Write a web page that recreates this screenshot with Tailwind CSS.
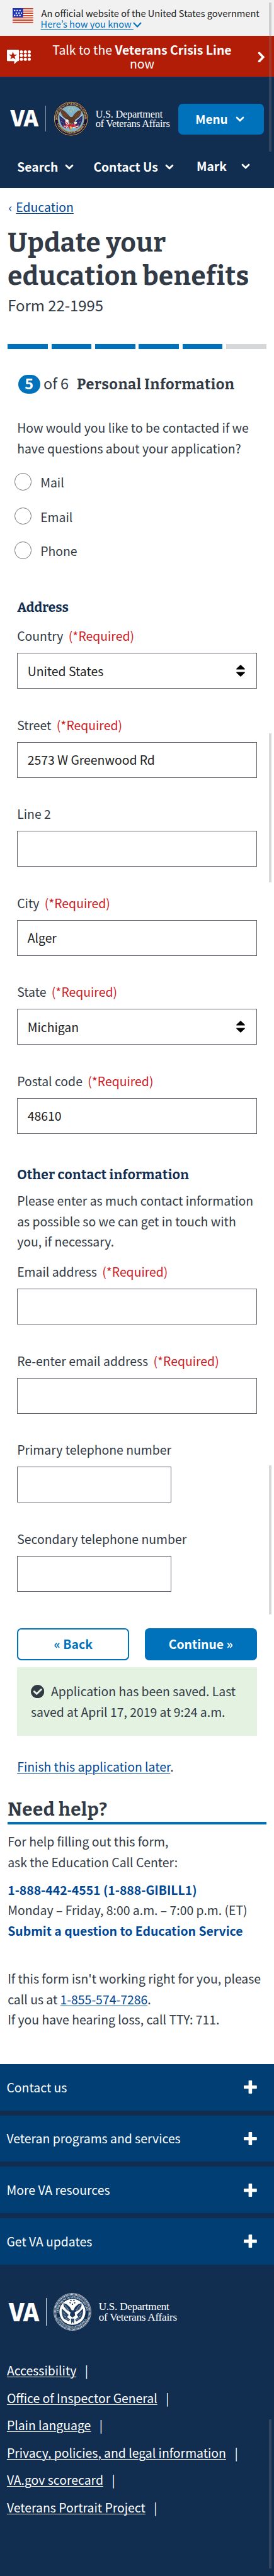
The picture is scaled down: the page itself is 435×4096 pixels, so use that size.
<!DOCTYPE html>
<html lang="en">
<head>
<meta charset="utf-8">
<meta name="viewport" content="width=device-width, initial-scale=1">
<title>Update your education benefits | VA.gov</title>
<script src="https://cdn.jsdelivr.net/npm/@tailwindcss/browser@4"></script>
</head>
<body class="relative w-[435px] h-[4096px] overflow-x-hidden bg-white text-[#323a45] text-[19.4px] leading-[32.65px] font-['Noto_Sans_CJK_JP','Noto_Sans',sans-serif]">

<svg class="absolute h-0 w-0">
  <defs>
    <symbol id="chev" viewBox="0 0 14 9"><path d="M2 2 L7 6.8 L12 2" fill="none" stroke="#fff" stroke-width="2.8" stroke-linecap="round"/></symbol>
    <symbol id="plus" viewBox="0 0 21 21"><path d="M8.6 0h3.6a1 1 0 0 1 1 1v6.9h6.6a1 1 0 0 1 1 1v3.4a1 1 0 0 1-1 1h-6.600v6.700a1 1 0 0 1-1 1h-3.600a1 1 0 0 1-1-1v-6.700h-6.600a1 1 0 0 1-1-1v-3.400a1 1 0 0 1 1-1h6.600v-6.900a1 1 0 0 1 1-1z" fill="#fff"/></symbol>
    <symbol id="updown" viewBox="0 0 14 19"><path d="M7 0 L13.700 6.200 V7.600 H.3 V6.200 Z M7 19 L13.700 12.800 V11.400 H.3 V12.800 Z" fill="#000"/></symbol>
    <path id="arcTop" d="M11 56 A39.500 39.500 0 1 1 89 56"/>
    <path id="arcBottom" d="M6.500 58 A44.500 44.500 0 0 0 93.500 58"/>
    <path id="arcTop2" d="M13.500 54 A36.700 36.700 0 1 1 86.500 54"/>
    <path id="arcBottom2" d="M9 58 A41.700 41.700 0 0 0 91 58"/>
  </defs>
</svg>

<!-- Government banner -->
<div class="flex h-[57.15px] bg-[#f1f1f1] pl-[20.3px] text-[14.6px] leading-[16.33px] text-[#212121]">
  <svg class="mt-[13px] h-[23.6px] w-[32.7px] shrink-0" viewBox="0 0 48 34.700">
    <rect width="48" height="34.700" fill="#fff"/>
    <path d="M0 1.300H48M0 6.700H48M0 12H48M0 17.350H48M0 22.700H48M0 28H48M0 33.350H48" stroke="#db3e1f" stroke-width="2.700"/>
    <rect width="24.500" height="21.300" fill="#1e33b1"/>
    <path d="M3 5.500H20M7 11.300H22M3 17H20" stroke="#fff" stroke-width="3" stroke-dasharray="3.400 2.800"/>
  </svg>
  <div class="mt-[13.2px] ml-[12.6px] whitespace-nowrap">
    <div>An official website of the United States government</div>
    <div class="-ml-[1px] flex text-[#0071bb]"><a class="underline decoration-[1.4px] underline-offset-[1.5px] whitespace-pre">Here’s how you know </a><svg class="-ml-[1px] mt-[5px] h-[9px] w-[14px]" viewBox="0 0 14 9"><path d="M1 1 L7 7.500 L13 1" fill="none" stroke="#0071bb" stroke-width="2"/></svg></div>
  </div>
</div>

<!-- Crisis line -->
<div class="flex h-[65.35px] bg-[#b21d08] pl-[10.9px] text-white">
  <svg class="mt-[21.8px] h-[23.1px] w-[38.1px] shrink-0" viewBox="16 116 56 34" fill="#fff">
    <path d="M18 116h24a2 2 0 0 1 2 2v23a2 2 0 0 1-2 2h-1.500l-7.500 7v-7h-15a2 2 0 0 1-2-2v-23a2 2 0 0 1 2-2z"/>
    <path d="M30 120.500l2.400 7h7.400l-6 4.400 2.300 7.100-6.100-4.400-6.100 4.400 2.300-7.100-6-4.400h7.400z" fill="#b21d08"/>
    <g><circle cx="49.700" cy="121" r="3.700"/><circle cx="59" cy="121" r="3.700"/><circle cx="68.300" cy="121" r="3.700"/><circle cx="49.700" cy="129.700" r="3.700"/><circle cx="59" cy="129.700" r="3.700"/><circle cx="68.300" cy="129.700" r="3.700"/><circle cx="49.700" cy="138.400" r="3.700"/><circle cx="59" cy="138.400" r="3.700"/><circle cx="68.300" cy="138.400" r="3.700"/></g>
  </svg>
  <div class="mt-[11px] ml-[26.500px] w-[300px] text-center text-[19.450px] leading-[21.8px]">Talk to the <b>Veterans Crisis Line</b><br>now</div>
  <svg class="mt-[24.5px] ml-[34px] h-[17.7px] w-[11.5px] shrink-0" viewBox="0 0 11.500 17.700"><path d="M2.500 2.300 L8.800 8.850 L2.500 15.400" fill="none" stroke="#fff" stroke-width="3.600" stroke-linecap="round"/></svg>
</div>

<!-- Header -->
<header class="h-[176.9px] bg-[#112e51] pt-[38.3px] font-bold text-white">
  <div class="flex h-[55.2px] items-start pl-[16.500px]">
    <div class="mt-[7.4px] w-[55.5px] text-[35.500px] leading-[35.500px] font-black tracking-[-1px]">VA</div>
    <div class="mt-[7.2px] h-[40.7px] w-[1.4px] bg-[#8896a8]"></div>
    <svg class="ml-[11.400px] h-[55.4px] w-[55.400px] shrink-0" viewBox="0 0 100 100">
      <circle cx="50" cy="50" r="49.500" fill="#17133c"/>
      <circle cx="50" cy="50" r="47.600" fill="none" stroke="#d9b44c" stroke-width="1.800"/>
      <circle cx="50" cy="50" r="37.300" fill="#7fb4cf" stroke="#d9b44c" stroke-width="1.200"/>
      <g font-family="Liberation Serif, serif" font-weight="700" font-size="8.300" fill="#e6c766">
        <text><textPath href="#arcTop" textLength="130" startOffset="2">DEPARTMENT OF VETERANS AFFAIRS</textPath></text>
        <text><textPath href="#arcBottom" textLength="106" startOffset="7">UNITED STATES OF AMERICA</textPath></text>
      </g>
      <g fill="#f0cf4f"><circle cx="45" cy="20" r="1.700"/><circle cx="54" cy="20" r="1.700"/><circle cx="42" cy="25" r="1.700"/><circle cx="57" cy="25" r="1.700"/><circle cx="49.500" cy="29" r="1.700"/></g>
      <path d="M17 40 L45 64 L40 76 L27 74 Q16 60 17 40z M83 40 L56 64 L60 76 L73 74 Q84 60 83 40z" fill="#2a2a66"/>
      <path d="M21 50l5 4M22 58l6 4M28 67l5 3M79 50l-5 4M78 58l-6 4M72 67l-5 3" stroke="#dfe3f0" stroke-width="1.300" stroke-dasharray="1.500 1.500"/>
      <path d="M16 38 L47 63 M84 38 L56 62" stroke="#d7e4ec" stroke-width="1.500"/>
      <path d="M33 56 Q31 66 37 69 L24 70 L35 78 L44 74 L48 84 L54 74 L65 78 L77 69 L63 70 L65 63 L53 66 L44 63z" fill="#c22a3c"/>
      <path d="M34 60l7 9M39 57l5 10M29 72l9-1M36 76l6-5M60 71l9 2M56 75l8 1M72 71l-8 1" stroke="#fff" stroke-width="2"/>
      <path d="M20 28 Q24 45 35 50 L41 52 L44 60 Q50 68 56 63 L61 58 L62 53 L72 46 Q81 37 79 26 L70 27 L60 36 L54 45 L48 45 L42 38 L34 30 L25 24z" fill="#5d3a26"/>
      <path d="M24 29l14 15M22 34l15 12M31 28l11 14M77 29L62 45M78 35L62 48M70 29L59 42" stroke="#8a5b3c" stroke-width="1.300"/>
      <path d="M34 54 Q40 50 44 56 L38 61 L33 57z M59 60 q8-4 9 3 l-8 4z" fill="#f3f1ea"/>
      <path d="M46 71l3 13 5-10z" fill="#e8bf45"/>
    </svg>
    <div class="mt-[12.800px] ml-[11.500px] w-[131.500px] whitespace-nowrap font-['Liberation_Serif',serif] text-[16.300px] leading-[15px] font-normal tracking-[-0.24px]">U.S. Department<br>of Veterans Affairs</div>
    <button class="mt-[3.900px] flex h-[48.900px] w-[135.900px] items-center rounded-[7px] bg-[#0071bb] pl-[27px] text-[19px] font-bold"><span class="w-[64px] text-left">Menu</span><svg class="h-[9px] w-[14px]"><use href="#chev"/></svg></button>
  </div>
  <nav class="mt-[33.300px] flex h-[32.65px] items-center pl-[27.300px] text-[19.300px]">
    <span class="w-[75.700px]">Search</span><svg class="h-[9px] w-[14px]"><use href="#chev"/></svg>
    <span class="ml-[31.400px] w-[114px]">Contact Us</span><svg class="h-[9px] w-[14px]"><use href="#chev"/></svg>
    <span class="-mt-[3px] ml-[35.600px] w-[71.400px]">Mark</span><svg class="-mt-[3px] h-[9px] w-[14px]"><use href="#chev"/></svg>
  </nav>
</header>

<main class="h-[2982.800px] px-[12.200px] pt-[13.900px]">
  <div class="pl-[1.300px] text-[#004795]"><span class="mr-[6px]">‹</span><a class="underline decoration-[1.4px] underline-offset-[2px]">Education</a></div>
  <h1 class="mt-[14.100px] whitespace-nowrap font-['Bitter','DejaVu_Serif',serif] text-[42px] leading-[53.100px] font-bold tracking-[0.62px]">Update your<br>education benefits</h1>
  <div class="mt-[3px] text-[23.900px] leading-[32px]">Form 22-1995</div>

  <!-- Progress -->
  <div class="mt-[45.800px] grid h-[8.200px] grid-cols-6 gap-[5.550px]">
    <div class="bg-[#0071bb]"></div><div class="bg-[#0071bb]"></div><div class="bg-[#0071bb]"></div><div class="bg-[#0071bb]"></div><div class="bg-[#0071bb]"></div><div class="bg-[#d6d7d9]"></div>
  </div>

  <form class="mt-[40.800px] pr-[15px] pl-[15px]">
    <div class="flex h-[30px] items-start pl-[1.400px] text-[23.500px] leading-[26.600px] whitespace-nowrap">
      <span class="h-[30px] w-[35.200px] rounded-[15px] bg-[#0071bb] text-center font-bold text-white">5</span>
      <span class="ml-[5.200px] w-[53px]">of 6</span>
      <span class="mt-[2.300px] font-['Bitter','DejaVu_Serif',serif] font-bold tracking-[0.5px]">Personal Information</span>
    </div>
    <p class="mt-[38.400px] whitespace-nowrap">How would you like to be contacted if we<br>have questions about your application?</p>

    <div class="mt-[22.800px] -ml-[4.200px] flex flex-col gap-[27.300px] leading-[30.500px]">
      <label class="flex h-[27.200px] items-start"><span class="h-[27.200px] w-[27.200px] rounded-full border border-[#757575]"></span><span class="ml-[14px]">Mail</span></label>
      <label class="flex h-[27.200px] items-start"><span class="h-[27.200px] w-[27.200px] rounded-full border border-[#757575]"></span><span class="ml-[14px]">Email</span></label>
      <label class="flex h-[27.200px] items-start"><span class="h-[27.200px] w-[27.200px] rounded-full border border-[#757575]"></span><span class="ml-[14px]">Phone</span></label>
    </div>

    <h2 class="mt-[63.300px] font-['Bitter','DejaVu_Serif',serif] text-[21px] leading-[28px] font-bold text-[#112e51]">Address</h2>
    <div class="mt-[15.200px] flex flex-col gap-[41.250px]">
      <div><label>Country <span class="ml-[4px] text-[#cd2026]">(*Required)</span></label>
        <div class="mt-[10.500px] flex h-[57.100px] items-center justify-between border-[1.400px] border-[#5b616b] pr-[17.600px] pl-[15.500px] text-[#212121]">United States<svg class="h-[19px] w-[14px]"><use href="#updown"/></svg></div></div>
      <div><label>Street <span class="ml-[4px] text-[#cd2026]">(*Required)</span></label>
        <div class="mt-[10.500px] flex h-[57.100px] items-center border-[1.400px] border-[#5b616b] pl-[15.500px] text-[#212121]">2573 W Greenwood Rd</div></div>
      <div><label>Line 2</label>
        <div class="mt-[10.500px] h-[57.100px] border-[1.400px] border-[#5b616b]"></div></div>
      <div><label>City <span class="ml-[4px] text-[#cd2026]">(*Required)</span></label>
        <div class="mt-[10.500px] flex h-[57.100px] items-center border-[1.400px] border-[#5b616b] pl-[15.500px] text-[#212121]">Alger</div></div>
      <div><label>State <span class="ml-[4px] text-[#cd2026]">(*Required)</span></label>
        <div class="mt-[10.500px] flex h-[57.100px] items-center justify-between border-[1.400px] border-[#5b616b] pr-[17.600px] pl-[15.500px] text-[#212121]">Michigan<svg class="h-[19px] w-[14px]"><use href="#updown"/></svg></div></div>
      <div><label>Postal code <span class="ml-[4px] text-[#cd2026]">(*Required)</span></label>
        <div class="mt-[10.500px] flex h-[57.100px] items-center border-[1.400px] border-[#5b616b] pl-[15.500px] text-[#212121]">48610</div></div>
    </div>

    <h2 class="mt-[51.300px] whitespace-nowrap font-['Bitter','DejaVu_Serif',serif] text-[21px] leading-[28px] font-bold tracking-[0.41px] text-[#112e51]">Other contact information</h2>
    <p class="mt-[11px] whitespace-nowrap">Please enter as much contact information<br>as possible so we can get in touch with<br>you, if necessary.</p>
    <div class="mt-[15px] flex flex-col gap-[41.250px]">
      <div><label>Email address <span class="ml-[4px] text-[#cd2026]">(*Required)</span></label>
        <div class="mt-[10.500px] h-[57.100px] border-[1.400px] border-[#5b616b]"></div></div>
      <div><label>Re-enter email address <span class="ml-[4px] text-[#cd2026]">(*Required)</span></label>
        <div class="mt-[10.500px] h-[57.100px] border-[1.400px] border-[#5b616b]"></div></div>
      <div><label>Primary telephone number</label>
        <div class="mt-[10.500px] h-[57.100px] w-[244.700px] border-[1.400px] border-[#5b616b]"></div></div>
      <div><label>Secondary telephone number</label>
        <div class="mt-[10.500px] h-[57.100px] w-[244.700px] border-[1.400px] border-[#5b616b]"></div></div>
    </div>

    <div class="mt-[58.400px] flex justify-between font-bold">
      <button type="button" class="flex h-[50.500px] w-[178.100px] items-center justify-center rounded-[6.800px] border-[2.700px] border-[#0071bb] pb-[1px] text-[#0071bb]">« Back</button>
      <button type="button" class="flex h-[50.500px] w-[178.100px] items-center justify-center rounded-[6.800px] bg-[#0071bb] pb-[1px] text-white">Continue »</button>
    </div>
    <div class="mt-[11px] h-[108.800px] bg-[#e4f2e1] pt-[22.200px] pl-[21.800px] whitespace-nowrap">
      <div class="flex items-center"><svg class="mr-[10.700px] h-[21.300px] w-[21.300px]" viewBox="0 0 21.300 21.300"><circle cx="10.650" cy="10.650" r="10.600" fill="#323a45"/><path d="M5.300 10.700 L9.300 14.300 L16.300 7.500" fill="none" stroke="#e4f2e1" stroke-width="3" stroke-linecap="round"/></svg>Application has been saved. Last</div>
      <div>saved at April 17, 2019 at 9:24 a.m.</div>
    </div>
    <div class="mt-[33.500px]"><a class="text-[#004795] underline decoration-[1.4px] underline-offset-[2px]">Finish this application later</a>.</div>
  </form>

  <h2 class="mt-[32.900px] border-b-[4px] border-[#0071bb] pb-[2.600px] font-['Bitter','DejaVu_Serif',serif] text-[29.500px] leading-[36px] font-bold tracking-[0.57px]">Need help?</h2>
  <p class="mt-[11.200px]">For help filling out this form,<br>ask the Education Call Center:</p>
  <p class="mt-[11px] whitespace-nowrap"><b class="text-[#004795]">1-888-442-4551 (1-888-GIBILL1)</b><br>Monday – Friday, 8:00 a.m. – 7:00 p.m. (ET)<br><b class="text-[#004795]">Submit a question to Education Service</b></p>
  <p class="mt-[43.200px] whitespace-nowrap">If this form isn't working right for you, please<br>call us at <a class="text-[#004795] underline decoration-[1.4px] underline-offset-[2px]">1-855-574-7286</a>.<br>If you have hearing loss, call TTY: 711.</p>
</main>

<footer class="h-[813.800px] bg-[#112e51] text-white">
  <div class="flex flex-col gap-[8.150px]">
    <div class="flex h-[73.500px] items-center justify-between bg-[#003e73] pr-[27.200px] pl-[10.500px]"><span>Contact us</span><svg class="h-[21px] w-[21px]"><use href="#plus"/></svg></div>
    <div class="flex h-[73.500px] items-center justify-between bg-[#003e73] pr-[27.200px] pl-[10.500px]"><span>Veteran programs and services</span><svg class="h-[21px] w-[21px]"><use href="#plus"/></svg></div>
    <div class="flex h-[73.500px] items-center justify-between bg-[#003e73] pr-[27.200px] pl-[10.500px]"><span>More VA resources</span><svg class="h-[21px] w-[21px]"><use href="#plus"/></svg></div>
    <div class="flex h-[73.500px] items-center justify-between bg-[#003e73] pr-[27.200px] pl-[10.500px]"><span>Get VA updates</span><svg class="h-[21px] w-[21px]"><use href="#plus"/></svg></div>
  </div>
  <div class="mt-[45.200px] flex h-[60.200px] items-start pl-[14px]">
    <div class="mt-[8.900px] w-[58.800px] text-[38.500px] leading-[38px] font-black tracking-[-1.200px]">VA</div>
    <div class="mt-[8.200px] h-[44px] w-px bg-[#dfe4ea]"></div>
    <svg class="ml-[11.600px] h-[60px] w-[60px] shrink-0" viewBox="0 0 100 100">
      <circle cx="50" cy="50" r="49.200" fill="none" stroke="#fff" stroke-width="1"/>
      <circle cx="50" cy="50" r="46.300" fill="none" stroke="#e8ecf1" stroke-width="3.200" stroke-dasharray="2 1.300"/>
      <circle cx="50" cy="50" r="43.500" fill="none" stroke="#fff" stroke-width=".8"/>
      <circle cx="50" cy="50" r="34.500" fill="#fff"/>
      <g font-family="Liberation Serif, serif" font-weight="700" font-size="7.300" fill="#dfe5ec">
        <text><textPath href="#arcTop2" textLength="114" startOffset="2">DEPARTMENT OF VETERANS AFFAIRS</textPath></text>
        <text><textPath href="#arcBottom2" textLength="96" startOffset="8">UNITED STATES OF AMERICA</textPath></text>
      </g>
      <g fill="#112e51"><circle cx="46" cy="20" r="1.900"/><circle cx="54" cy="20" r="1.900"/><circle cx="44" cy="26" r="1.900"/><circle cx="56" cy="26" r="1.900"/><circle cx="50" cy="30" r="1.900"/></g>
      <path d="M26 27 Q26 40 38 47 L45 51 L43 59 L50 65 L57 60 L56 51 L64 47 Q76 40 74 27 L66 29 L57 37 L53 46 L48 46 L43 37 L34 29z" fill="#1b365b"/>
      <path d="M22 41 L40 58 L36 64 L44 70 L40 75 L27 68 Q20 56 22 41z M78 41 L61 58 L66 64 L57 70 L60 76 L72 68 Q80 56 78 41z" fill="#2c466a"/>
      <path d="M29 31l12 14M28 37l12 10M71 31L59 45M72 37L60 48M26 52l5 5M27 60l6 4M33 68l8 2M74 52l-5 5M73 60l-6 4M67 68l-8 2" stroke="#cbd4de" stroke-width="1.300"/>
      <path d="M46 68l1 14 3-6 4 6 1-14z" fill="#2c466a"/>
    </svg>
    <div class="mt-[14.200px] ml-[11.300px] whitespace-nowrap font-['Liberation_Serif',serif] text-[17.100px] leading-[16.700px] tracking-[-0.230px]">U.S. Department<br>of Veterans Affairs</div>
  </div>
  <div class="mt-[47.200px] flex flex-col gap-[10.900px] pl-[10.900px] whitespace-nowrap">
    <div><a class="underline decoration-[1.4px] underline-offset-[2px]">Accessibility</a><span class="ml-[13.500px]">|</span></div>
    <div><a class="underline decoration-[1.4px] underline-offset-[2px]">Office of Inspector General</a><span class="ml-[13.500px]">|</span></div>
    <div><a class="underline decoration-[1.4px] underline-offset-[2px]">Plain language</a><span class="ml-[13.500px]">|</span></div>
    <div><a class="underline decoration-[1.4px] underline-offset-[2px]">Privacy, policies, and legal information</a><span class="ml-[13.500px]">|</span></div>
    <div><a class="underline decoration-[1.4px] underline-offset-[2px]">VA.gov scorecard</a><span class="ml-[13.500px]">|</span></div>
    <div><a class="underline decoration-[1.4px] underline-offset-[2px]">Veterans Portrait Project</a><span class="ml-[13.500px]">|</span></div>
  </div>
</footer>

<!-- Scroll indicators over the page -->
<div class="absolute top-[4px] left-[427px] h-[237px] w-[4px] bg-[#808080]/30"></div>
<div class="absolute top-[1166px] left-[427px] h-[237px] w-[4px] bg-[#808080]/30"></div>
<div class="absolute top-[2330px] left-[427px] h-[236.600px] w-[4px] bg-[#808080]/30"></div>
<div class="absolute top-[3847px] left-[427px] h-[237px] w-[4px] bg-[#808080]/30"></div>
</body>
</html>
